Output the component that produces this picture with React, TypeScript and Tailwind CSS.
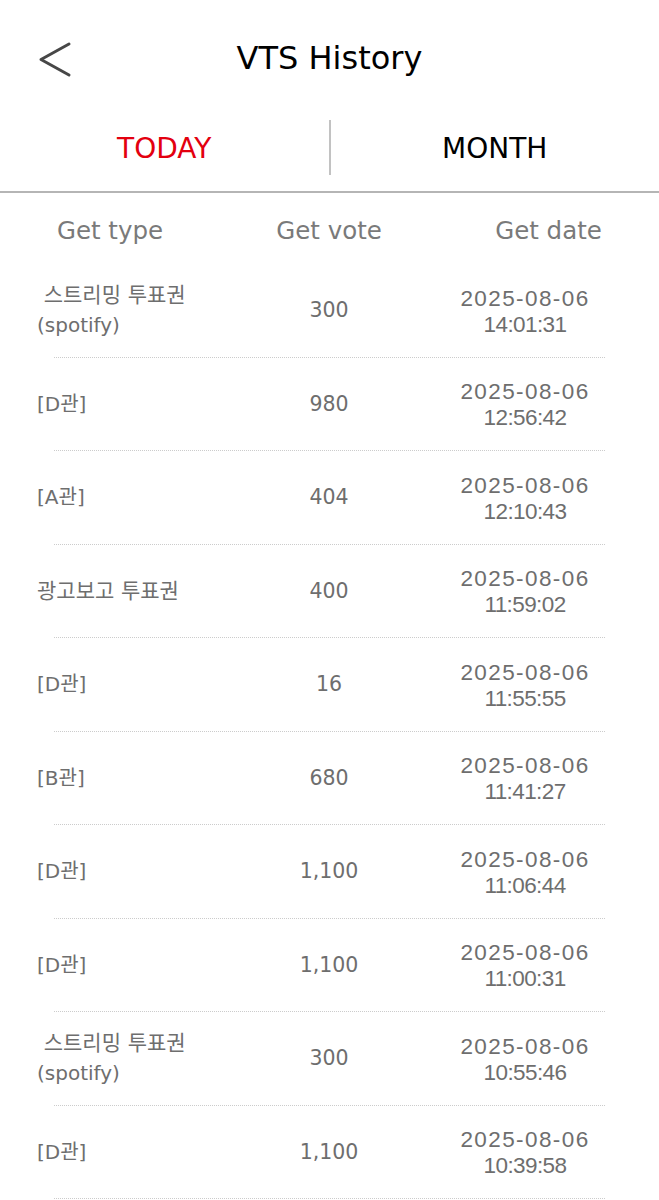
import React from "react";

type Row = { type: string[]; vote: string; time: string };

const rows: Row[] = [
  { type: ["\u00a0스트리밍 투표권", "(spotify)"], vote: "300", time: "14:01:31" },
  { type: ["[D관]"], vote: "980", time: "12:56:42" },
  { type: ["[A관]"], vote: "404", time: "12:10:43" },
  { type: ["광고보고 투표권"], vote: "400", time: "11:59:02" },
  { type: ["[D관]"], vote: "16", time: "11:55:55" },
  { type: ["[B관]"], vote: "680", time: "11:41:27" },
  { type: ["[D관]"], vote: "1,100", time: "11:06:44" },
  { type: ["[D관]"], vote: "1,100", time: "11:00:31" },
  { type: ["\u00a0스트리밍 투표권", "(spotify)"], vote: "300", time: "10:55:46" },
  { type: ["[D관]"], vote: "1,100", time: "10:39:58" },
];

const FONT = "font-['DejaVu_Sans','Noto_Sans_CJK_KR',sans-serif]";

export default function App() {
  return (
    <div className={`w-[659px] bg-white ${FONT} antialiased`}>
      {/* Top bar */}
      <div className="grid h-[116px] grid-cols-[1fr_auto_1fr] items-center">
        <div className="pl-[38px] pt-[4px]">
          <svg width="34" height="38" viewBox="0 0 34 38" fill="none">
            <polyline
              points="31,3 3,18.5 31,34"
              stroke="#474747"
              strokeWidth="3"
              strokeLinecap="round"
              strokeLinejoin="round"
            />
          </svg>
        </div>
        <div className="text-[32px] leading-none text-black">VTS History</div>
        <div />
      </div>

      {/* Tabs */}
      <div className="flex h-[77px] border-b-2 border-[#b5b5b5]">
        <div className="flex flex-1 items-center justify-center pb-[10px] text-[28px] leading-none text-[#e3000f]">
          TODAY
        </div>
        <div className="mt-[4px] h-[55px] w-[2px] bg-[#c2c2c2]" />
        <div className="flex flex-1 items-center justify-center pb-[10px] text-[28px] leading-none text-black">
          MONTH
        </div>
      </div>

      {/* Column header */}
      <div className="flex h-[71px] items-center pt-[5px] text-[24.5px] leading-none text-[#7a7a7a]">
        <div className="w-[220px] text-center">Get type</div>
        <div className="w-[218px] text-center">Get vote</div>
        <div className="flex-1 text-center">Get date</div>
      </div>

      {/* Rows */}
      {rows.map((r, i) => (
        <div key={i} className="flex flex-col">
          <div className="flex h-[92.5px] items-center text-[#6e6e6e]">
            <div className="w-[220px] pl-[37px] text-[20px] leading-[30px]">
              {r.type.map((t, j) => (
                <div
                  key={j}
                  className={t.includes("투표권") ? "whitespace-pre text-[21px]" : "whitespace-pre"}
                >
                  {t}
                </div>
              ))}
            </div>
            <div className="w-[218px] text-center text-[20.5px] leading-none">{r.vote}</div>
            <div className="w-[174px] pt-[3px] text-center font-['Liberation_Sans',sans-serif] text-[22.5px] leading-[26px]">
              <div className="tracking-[1.4px]">2025-08-06</div>
              <div className="tracking-[-0.6px]">{r.time}</div>
            </div>
          </div>
          <div className="ml-[54px] w-[551px] border-t border-dotted border-[#cccccc]" />
        </div>
      ))}
    </div>
  );
}
